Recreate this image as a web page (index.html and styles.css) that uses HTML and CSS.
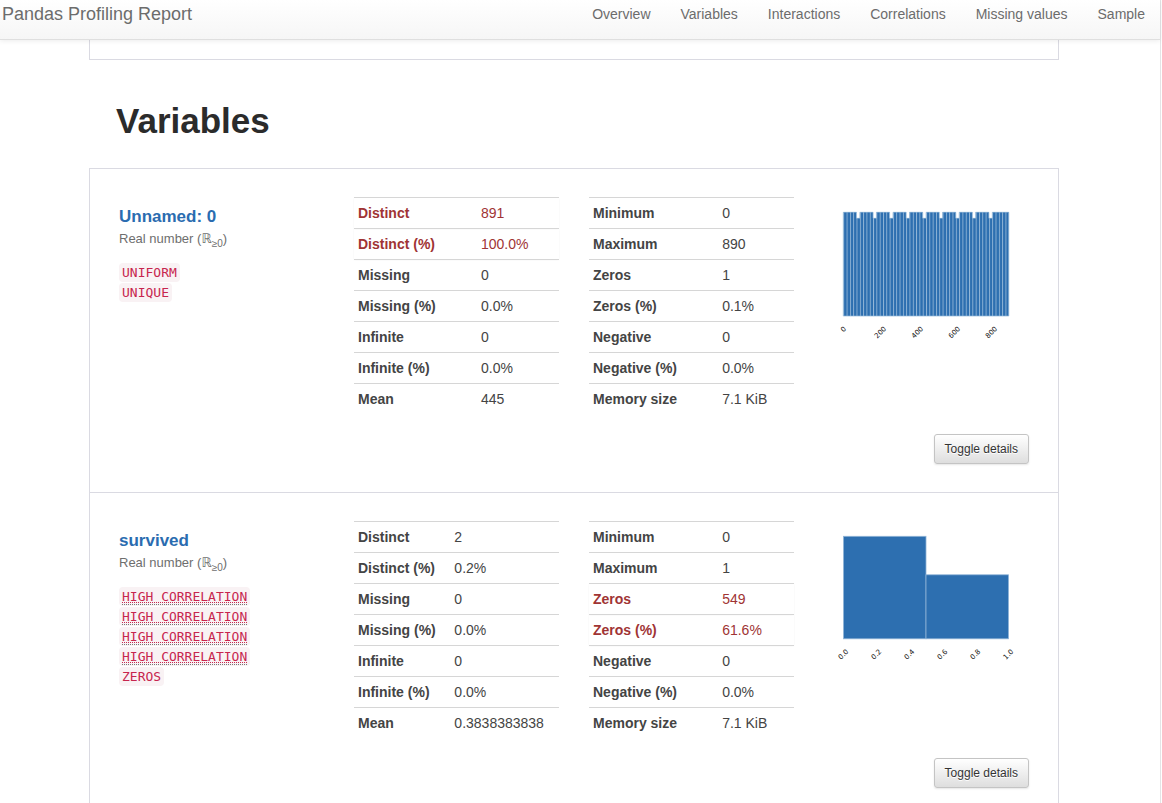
FILE: index.html
```html
<!DOCTYPE html>
<html lang="en">
<head>
<meta charset="utf-8">
<title>Pandas Profiling Report</title>
<link rel="stylesheet" href="styles.css">
</head>
<body>
<div class="page">
  <nav class="navbar">
    <a class="brand" href="#top">Pandas Profiling Report</a>
    <div class="nav-links">
      <a href="#overview">Overview</a>
      <a href="#variables">Variables</a>
      <a href="#interactions">Interactions</a>
      <a href="#correlations">Correlations</a>
      <a href="#missing">Missing values</a>
      <a href="#sample">Sample</a>
    </div>
  </nav>
  <main class="content">
    <div class="container">
      <div class="section-end"></div>
      <h1 id="variables">Variables</h1>
      <div class="section-items">
        <section class="variable">
          <div class="description">
            <h2><a href="#unnamed">Unnamed: 0</a></h2>
            <p class="type">Real number (<span class="set">ℝ</span><sub>≥0</sub>)</p>
            <ul class="tags">
              <li><code>UNIFORM</code></li>
              <li><code>UNIQUE</code></li>
            </ul>
          </div>
          <table class="stats wide">
            <tr class="alert"><th>Distinct</th><td>891</td></tr>
            <tr class="alert"><th>Distinct (%)</th><td>100.0%</td></tr>
            <tr><th>Missing</th><td>0</td></tr>
            <tr><th>Missing (%)</th><td>0.0%</td></tr>
            <tr><th>Infinite</th><td>0</td></tr>
            <tr><th>Infinite (%)</th><td>0.0%</td></tr>
            <tr><th>Mean</th><td>445</td></tr>
          </table>
          <table class="stats wider">
            <tr><th>Minimum</th><td>0</td></tr>
            <tr><th>Maximum</th><td>890</td></tr>
            <tr><th>Zeros</th><td>1</td></tr>
            <tr><th>Zeros (%)</th><td>0.1%</td></tr>
            <tr><th>Negative</th><td>0</td></tr>
            <tr><th>Negative (%)</th><td>0.0%</td></tr>
            <tr><th>Memory size</th><td>7.1 KiB</td></tr>
          </table>
          <svg class="histogram" viewBox="0 0 205 150" role="img" aria-label="Histogram of Unnamed: 0">
            <defs>
              <pattern id="bins" x="19.3" y="0" width="3.31" height="150" patternUnits="userSpaceOnUse">
                <rect width="3.31" height="150" fill="#2d6fb0"/>
                <rect width="0.9" height="150" fill="#94b7d8"/>
              </pattern>
            </defs>
            <path fill="url(#bins)" d="M19.3 119V15H32.5V21H35.9V15H49.1V21H52.4V15H65.6V21H69V15H82.2V21H85.5V15H98.7V21H102.1V15H115.3V21H118.6V15H131.8V21H135.2V15H148.4V21H151.7V15H164.9V21H168.3V15H184.8V119Z"/>
            <path fill="none" stroke="#94b7d8" stroke-width="0.7" d="M19.3 119V15.3H32.5V21.3H35.9V15.3H49.1V21.3H52.4V15.3H65.6V21.3H69V15.3H82.2V21.3H85.5V15.3H98.7V21.3H102.1V15.3H115.3V21.3H118.6V15.3H131.8V21.3H135.2V15.3H148.4V21.3H151.7V15.3H164.9V21.3H168.3V15.3H184.8V119Z"/>
            <g class="ticks">
              <text transform="translate(21 134) rotate(-45)">0</text>
              <text transform="translate(58 137) rotate(-45)">200</text>
              <text transform="translate(95 137) rotate(-45)">400</text>
              <text transform="translate(132 137) rotate(-45)">600</text>
              <text transform="translate(169 137) rotate(-45)">800</text>
            </g>
          </svg>
          <div class="actions"><button type="button">Toggle details</button></div>
        </section>
        <section class="variable">
          <div class="description">
            <h2><a href="#survived">survived</a></h2>
            <p class="type">Real number (<span class="set">ℝ</span><sub>≥0</sub>)</p>
            <ul class="tags">
              <li><code><abbr>HIGH CORRELATION</abbr></code></li>
              <li><code><abbr>HIGH CORRELATION</abbr></code></li>
              <li><code><abbr>HIGH CORRELATION</abbr></code></li>
              <li><code><abbr>HIGH CORRELATION</abbr></code></li>
              <li><code>ZEROS</code></li>
            </ul>
          </div>
          <table class="stats narrow">
            <tr><th>Distinct</th><td>2</td></tr>
            <tr><th>Distinct (%)</th><td>0.2%</td></tr>
            <tr><th>Missing</th><td>0</td></tr>
            <tr><th>Missing (%)</th><td>0.0%</td></tr>
            <tr><th>Infinite</th><td>0</td></tr>
            <tr><th>Infinite (%)</th><td>0.0%</td></tr>
            <tr><th>Mean</th><td>0.3838383838</td></tr>
          </table>
          <table class="stats wider">
            <tr><th>Minimum</th><td>0</td></tr>
            <tr><th>Maximum</th><td>1</td></tr>
            <tr class="alert"><th>Zeros</th><td>549</td></tr>
            <tr class="alert"><th>Zeros (%)</th><td>61.6%</td></tr>
            <tr><th>Negative</th><td>0</td></tr>
            <tr><th>Negative (%)</th><td>0.0%</td></tr>
            <tr><th>Memory size</th><td>7.1 KiB</td></tr>
          </table>
          <svg class="histogram" viewBox="0 0 205 150" role="img" aria-label="Histogram of survived">
            <g fill="#2d6fb0" stroke="#8fb4d7" stroke-width="0.8">
              <rect x="19.5" y="15.3" width="82.5" height="102.5"/>
              <rect x="102" y="53.8" width="82.5" height="64"/>
            </g>
            <g class="ticks">
              <text transform="translate(21 135) rotate(-45)">0.0</text>
              <text transform="translate(54 135) rotate(-45)">0.2</text>
              <text transform="translate(87 135) rotate(-45)">0.4</text>
              <text transform="translate(120 135) rotate(-45)">0.6</text>
              <text transform="translate(153 135) rotate(-45)">0.8</text>
              <text transform="translate(186 135) rotate(-45)">1.0</text>
            </g>
          </svg>
          <div class="actions"><button type="button">Toggle details</button></div>
        </section>
      </div>
    </div>
  </main>
</div>
</body>
</html>
```
FILE: styles.css
```css
* { box-sizing: border-box; }

body {
  margin: 0;
  height: 100vh;
  overflow: hidden;
  font: 14px/20px "Liberation Sans", Arial, sans-serif;
  color: #444;
  background: #fff;
}

a { color: inherit; text-decoration: none; }

.page {
  min-height: 100vh;
  margin-right: 1px;
  border-right: 1px solid #e4e4e6;
}

.navbar {
  position: relative;
  display: flex;
  justify-content: space-between;
  height: 40px;
  padding: 4px 15px 0 2px;
  color: #6c6c6c;
  background: linear-gradient(#fff, #f6f6f6);
  border-bottom: 1px solid #dfdfdf;
  box-shadow: 0 1px 5px rgba(0, 0, 0, 0.08);
}

.brand { font-size: 18px; }

.nav-links { display: flex; gap: 30px; }

.content { padding-right: 12px; }

.container {
  max-width: 970px;
  margin: 0 auto;
}

.section-end {
  height: 20px;
  border: 1px solid #dadae2;
  border-top: 0;
}

h1 {
  margin: 41px 27px 27px;
  font-size: 35px;
  line-height: 40px;
  color: #2b2b2b;
}

.section-items {
  border: 1px solid #dadae2;
}

.variable {
  display: grid;
  grid-template-columns: repeat(4, minmax(0, 1fr));
  gap: 20px 30px;
  align-items: start;
  padding: 28px 29px;
}

.variable + .variable { border-top: 1px solid #dadae2; }

.description { padding-top: 10px; }

h2 {
  margin: 0;
  font-size: 17px;
  line-height: 20px;
  color: #2a6cb0;
}

.type {
  margin: 2px 0 14px;
  font-size: 13px;
  line-height: 20px;
  color: #6e6e6e;
}

.set { font-family: "DejaVu Sans", sans-serif; }

.type sub {
  font-size: 10px;
  line-height: 0;
}

.tags {
  margin: 0;
  padding: 0;
  list-style: none;
}

.tags li { height: 20px; }

code {
  display: inline-block;
  height: 19px;
  padding: 0 3px;
  font: 13px/19px "DejaVu Sans Mono", monospace;
  color: #c7254e;
  background: #f9f2f4;
  border-radius: 4px;
  vertical-align: top;
}

abbr {
  text-decoration: underline dotted 1px;
  border-bottom: 1px dotted #777;
}

.stats {
  width: 100%;
  border-collapse: separate;
  border-spacing: 0;
  table-layout: fixed;
}

.stats th,
.stats td {
  padding: 5px 4px;
  text-align: left;
  border-top: 1px solid #d6d6d6;
}

.stats td { white-space: nowrap; }
.wide th { width: 60%; }
.wider th { width: 63%; }
.narrow th { width: 47%; }

.alert {
  color: #a03434;
  box-shadow: 0 1px 2px rgba(0, 0, 0, 0.05);
}

.histogram {
  display: block;
  width: 100%;
}

.ticks {
  font: 7px "DejaVu Sans", sans-serif;
  text-anchor: middle;
  fill: #111;
}

.actions {
  grid-column: 1 / -1;
  text-align: right;
}

button {
  display: inline-block;
  height: 30px;
  padding: 0 10px;
  font: 12px/18px "Liberation Sans", Arial, sans-serif;
  color: #333;
  text-shadow: 0 1px 0 #fff;
  vertical-align: top;
  background: linear-gradient(#fff, #dedede);
  border: 1px solid #c4c4c4;
  border-radius: 3px;
  box-shadow: 0 1px 2px rgba(0, 0, 0, 0.1);
}
```
